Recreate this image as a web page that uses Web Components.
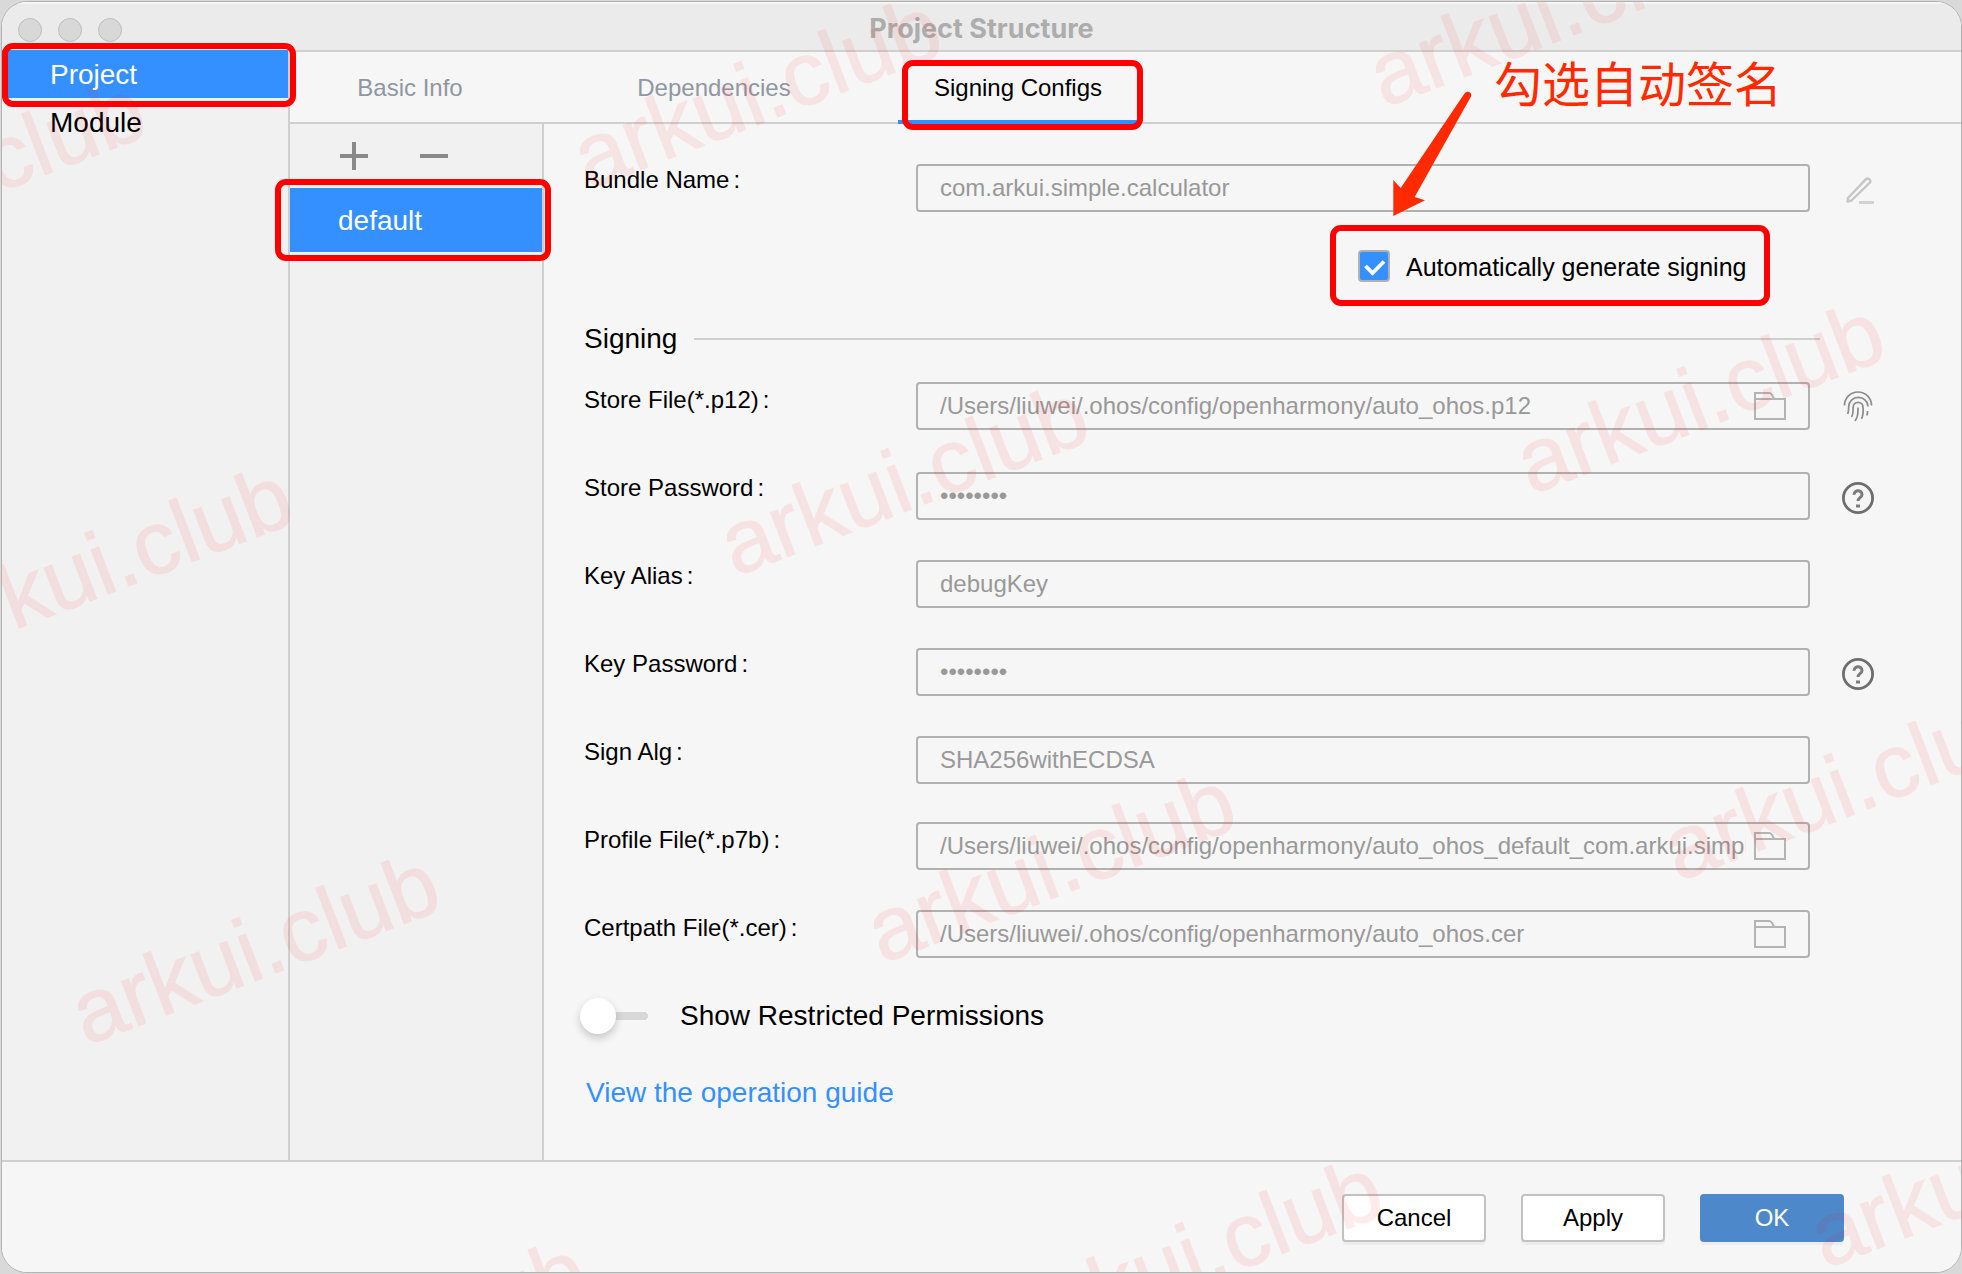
<!DOCTYPE html>
<html lang="en">
<head>
<meta charset="utf-8">
<title>Project Structure</title>
<style>
  html, body { height: 100%; }
  body {
    margin: 0;
    box-sizing: border-box;
    padding: 1px 0 1px 1px;
    background: #d9d9d9;
    color: #000;
    font: 24px/30px "Liberation Sans", Arial, sans-serif;
    --line: #cfcfcf;
    --pane: #f1f1f1;
    --page: #f6f6f6;
    --accent: #3590ff;
    --mark: #ff0000;
  }
</style>
</head>
<body>
<project-window></project-window>

<script>
const FRAME = `
  .framed { position: relative; }
  .framed::after {
    content: ""; position: absolute; z-index: 6; pointer-events: none;
    inset: var(--frame); border: 6px solid var(--mark); border-radius: 11px;
  }`;

function define(name, html, setup) {
  const tpl = document.createElement('template');
  tpl.innerHTML = html;
  customElements.define(name, class extends HTMLElement {
    constructor() {
      super();
      this.attachShadow({ mode: 'open' }).append(tpl.content.cloneNode(true));
    }
    connectedCallback() { if (setup) setup(this, this.shadowRoot); }
  });
}

const ICONS = {
  plus: '<svg width="28" height="28" viewBox="0 0 28 28"><path d="M14 0v28M0 14h28" stroke="#8a8a8a" stroke-width="4"/></svg>',
  minus: '<svg width="28" height="28" viewBox="0 0 28 28"><path d="M0 14h28" stroke="#8a8a8a" stroke-width="4"/></svg>',
  edit: '<svg width="32" height="32" viewBox="0 0 32 32" fill="none" stroke="#c6c6c6" stroke-width="2.4"><path d="M6 24L5.500 27.500l4-1L28 8.500q1-2-.8-3.400t-3.200 0z" stroke-linejoin="round"/><path d="M17 28.500h15" stroke="#d2d2d2" stroke-width="3"/></svg>',
  print: '<svg width="32" height="32" viewBox="0 0 32 32" fill="none" stroke="#8c8c8c" stroke-width="1.700"><path d="M2.500 15.500a13.500 13.500 0 0 1 27 0"/><path d="M5.700 24c1.200-3 .8-5 1-7.500a9.500 9 0 0 1 19.300 0"/><path d="M25.600 21q0 2.500-.8 4.500"/><path d="M9.500 27c2.500-3.500 1.200-6.500 1.700-10a4.900 4.700 0 0 1 9.800 0c.4 4.500.4 8-1.500 12"/><path d="M13 31c3.500-4.500 3-8.500 3-13.500"/></svg>',
  help: '<svg width="32" height="32" viewBox="0 0 32 32" fill="none" stroke="#6e6e6e"><circle cx="16" cy="16" r="14.600" stroke-width="2.800"/><path d="M12 12.800c0-5.200 8-5.200 8-.3 0 3.200-4 3.200-4 6.500" stroke-width="3" stroke="#7c7c7c"/><path d="M14 24h4" stroke-width="3" stroke="#7c7c7c"/></svg>',
  folder: '<svg width="32" height="28" viewBox="0 0 32 28" fill="none" stroke="#b4b4b4" stroke-width="2"><path d="M1 27V1h14.500q1.500 0 2.500 2l2 3.500M1 7h30v20H1z"/></svg>'
};

define('ui-icon', `<style>:host{display:block;flex:none}svg{display:block}</style><span></span>`, (el, root) => {
  root.querySelector('span').innerHTML = ICONS[el.getAttribute('name')];
});

define('title-bar', `
  <style>
    :host { display: grid; grid-template-columns: 1fr auto 1fr; align-items: center; height: 48px; padding: 0 16px;
      box-sizing: border-box; background: #ebebeb; box-shadow: inset 0 2px #f5f5f5; }
    .lights { display: flex; gap: 16px; padding-top: 8px; }
    i { width: 24px; height: 24px; box-sizing: border-box; border: 1px solid #bdbdbd; border-radius: 50%; background: #d9d9d9; }
    h1 { margin: 0; padding-top: 6px; font: bold 27px/30px Inter, "Liberation Sans", sans-serif; color: #adadad; }
  </style>
  <div class="lights"><i></i><i></i><i></i></div>
  <h1><slot></slot></h1>`);

define('nav-item', `
  <style>
    ${FRAME}
    :host { display: block; --frame: -7px -8px -9px 0; }
    :host([tall]) { --frame: -9px -9px -9px -15px; }
    button { display: block; width: 100%; height: 48px; padding: 2px 48px 0; border: 0; background: none; color: #000;
      font: 28px/32px "Liberation Sans", Arial, sans-serif; text-align: left; }
    :host([tall]) button { height: 64px; }
    .framed button { background: var(--accent); color: #fff; }
  </style>
  <div><button type="button"><slot></slot></button></div>`, (el, root) => {
  root.querySelector('div').classList.toggle('framed', el.hasAttribute('selected'));
});

define('tab-item', `
  <style>
    ${FRAME}
    :host { display: block; width: 240px; --frame: 8px -5px -6px 4px; margin-bottom: -2px; }
    button { display: block; width: 100%; height: 72px; padding: 0; border: 0; background: none; color: #9197a3;
      font: 24px/30px "Liberation Sans", Arial, sans-serif; }
    .framed button { color: #000; border-bottom: 4px solid var(--accent); padding-top: 4px; }
  </style>
  <div><button type="button"><slot></slot></button></div>`, (el, root) => {
  root.querySelector('div').classList.toggle('framed', el.hasAttribute('selected'));
});

define('config-list', `
  <style>
    :host { display: block; width: 252px; flex: none; border-right: 2px solid var(--line); background: var(--pane); }
    .tools { display: flex; align-items: center; gap: 52px; height: 64px; padding-left: 50px; }
    button { padding: 0; border: 0; background: none; }
  </style>
  <div class="tools">
    <button type="button" aria-label="Add"><ui-icon name="plus"></ui-icon></button>
    <button type="button" aria-label="Remove"><ui-icon name="minus"></ui-icon></button>
  </div>
  <slot></slot>`);

define('form-field', `
  <style>
    :host { display: grid; grid-template-columns: 332px minmax(0, 1fr) 64px; align-items: start; min-height: 88px; }
    label { padding-top: 3px; line-height: 30px; }
    label span { margin-left: 4px; }
    .box { display: flex; align-items: center; gap: 8px; box-sizing: border-box; height: 48px; margin-top: 2px; padding: 0 22px;
      border: 2px solid #b1b1b1; border-radius: 4px; }
    input { flex: 1; min-width: 0; height: 44px; padding: 0; border: 0; outline: 0; background: none; color: #999;
      font: 24px/30px "Liberation Sans", Arial, sans-serif; }
    button { padding: 0; border: 0; background: none; }
    .aside { display: flex; justify-content: flex-end; padding-top: 12px; }
    :host([kind="file"]) .box { margin-top: 0; }
    :host([kind="file"]) .aside { padding-top: 8px; }
  </style>
  <label for="f"><slot></slot><span>:</span></label>
  <div class="box"><input id="f" readonly></div>
  <div class="aside"></div>`, (el, root) => {
  const input = root.querySelector('input');
  const kind = el.getAttribute('kind');
  input.type = kind === 'password' ? 'password' : 'text';
  input.value = el.getAttribute('value');
  if (kind === 'file')
    input.insertAdjacentHTML('afterend', '<button type="button" aria-label="Browse"><ui-icon name="folder"></ui-icon></button>');
  if (el.hasAttribute('aside'))
    root.querySelector('.aside').innerHTML = `<button type="button" aria-label="${el.getAttribute('aside')}"><ui-icon name="${el.getAttribute('aside')}"></ui-icon></button>`;
});

define('auto-sign', `
  <style>
    ${FRAME}
    :host { display: flex; justify-content: flex-end; padding-right: 124px; }
    .framed { display: flex; align-items: center; gap: 16px; height: 32px; --frame: -25px -20px -24px -28px; }
    .tick { display: grid; width: 32px; height: 32px; }
    .tick > * { grid-area: 1 / 1; }
    input { appearance: none; width: 32px; height: 32px; margin: 0; border: 2px solid #b1b1b1; border-radius: 4px; background: var(--accent); }
    svg { z-index: 1; pointer-events: none; }
    label { min-width: 344px; font-size: 25px; padding-top: 2px; }
    .note { position: absolute; right: -32px; bottom: 177px; z-index: 6; color: #ff2a00; white-space: nowrap;
      font: 48px/48px "Noto Sans CJK SC", sans-serif; }
    .arrow { position: absolute; left: 34px; bottom: 66px; z-index: 6; }
  </style>
  <div class="framed">
    <span class="tick"><input id="auto" type="checkbox" checked>
      <svg width="32" height="32" viewBox="0 0 32 32"><path d="M7.500 16l7 7L26 11.500" fill="none" stroke="#fff" stroke-width="3.800"/></svg></span>
    <label for="auto"><slot></slot></label>
    <span class="note" lang="zh">勾选自动签名</span>
    <svg class="arrow" width="82" height="126" viewBox="0 0 82 126"><path d="M72.500 3.500A3.600 3.600 0 0 1 79 6.500L22.700 107L33 110.300L1.300 126V90L8.700 98Z" fill="#ff2a00"/></svg>
  </div>`);

define('section-title', `
  <style>
    :host { display: flex; align-items: center; gap: 17px; margin: 40px 54px 26px 0; height: 34px; }
    h2 { margin: 0; font: 28px/34px "Liberation Sans", Arial, sans-serif; }
    i { flex: 1; height: 2px; background: var(--line); }
  </style>
  <h2><slot></slot></h2><i></i>`);

define('toggle-switch', `
  <style>
    :host { display: flex; align-items: center; gap: 32px; margin-left: -4px; font-size: 28px; line-height: 32px; }
    input { appearance: none; flex: none; width: 68px; height: 36px; margin: 0; 
      background: linear-gradient(#d8d8d8, #d8d8d8) 18px 14px / 46px 8px no-repeat, radial-gradient(circle at 64px 18px, #d8d8d8 4px, transparent 4px); }
    input::before { content: ""; display: block; width: 36px; height: 36px; border-radius: 50%; background: #fff; box-shadow: 0 4px 8px rgba(0,0,0,.2); }
  </style>
  <input id="t" type="checkbox" role="switch"><label for="t"><slot></slot></label>`);

define('guide-link', `
  <style>
    :host { display: block; margin-top: 43px; padding-left: 2px; font-size: 28px; line-height: 32px; }
    a { color: var(--accent); text-decoration: none; }
  </style>
  <a href="#guide"><slot></slot></a>`);

define('dialog-footer', `
  <style>
    :host { display: flex; justify-content: flex-end; gap: 35px; padding: 32px 117px 30px; border-top: 2px solid var(--line); background: var(--page); }
    button { width: 144px; height: 48px; padding: 0; border: 2px solid #c2c2c2; border-radius: 4px; background: #fff; color: #000;
      font: 24px/30px "Liberation Sans", Arial, sans-serif; box-shadow: 0 3px 1px rgba(0,0,0,.04); }
    .ok { border-color: #4d89ca; background: #4d89ca; color: #fff; }
  </style>
  <button type="button">Cancel</button><button type="button">Apply</button><button type="button" class="ok">OK</button>`);

define('water-mark', `
  <style>
    :host { position: absolute; inset: 0; z-index: 5; overflow: hidden; pointer-events: none; }
    svg { display: block; width: 100%; height: 100%; opacity: .075; }
    text { font: 90px "Liberation Sans", Arial, sans-serif; fill: #f00; stroke: #f00; stroke-width: 1px; }
  </style>
  <svg aria-hidden="true"></svg>`, (el, root) => {
  const spots = [[0, -2], [0, -1], [0, 0], [0, 1], [1, -2], [1, -1], [1, 0], [1, 1], [2, -2], [2, -1], [2, 0], [2, 1]];
  root.querySelector('svg').innerHTML = spots.map(([col, row]) =>
    `<text transform="translate(${84 + 796 * col + 147 * row} ${1044 - 82 * col + 387 * row}) rotate(-21)">${el.getAttribute('text')}</text>`).join('');
});

define('project-window', `
  <style>
    :host { display: flex; flex-direction: column; position: relative; box-sizing: border-box; min-height: 100%;
      border: 1px solid #b3b3b3; border-radius: 26px; overflow: hidden; background: var(--page); }
    main { flex: 1; display: flex; }
    nav { flex: none; width: 286px; border-right: 2px solid var(--line); background: var(--pane); }
    .right { flex: 1; min-width: 0; display: flex; flex-direction: column; }
    .tabs { display: flex; gap: 64px; height: 70px; border: solid var(--line); border-width: 2px 0; }
    .body { flex: 1; display: flex; }
    form { flex: 1; min-width: 0; padding: 38px 87px 40px 40px; }
  </style>
  <title-bar>Project Structure</title-bar>
  <main>
    <nav><nav-item selected>Project</nav-item><nav-item>Module</nav-item></nav>
    <div class="right">
      <div class="tabs"><tab-item>Basic Info</tab-item><tab-item>Dependencies</tab-item><tab-item selected>Signing Configs</tab-item></div>
      <div class="body">
        <config-list><nav-item tall selected>default</nav-item></config-list>
        <form>
          <form-field value="com.arkui.simple.calculator" aside="edit">Bundle Name</form-field>
          <auto-sign>Automatically generate signing</auto-sign>
          <section-title>Signing</section-title>
          <form-field kind="file" value="/Users/liuwei/.ohos/config/openharmony/auto_ohos.p12" aside="print">Store File(*.p12)</form-field>
          <form-field kind="password" value="12345678" aside="help">Store Password</form-field>
          <form-field value="debugKey">Key Alias</form-field>
          <form-field kind="password" value="12345678" aside="help">Key Password</form-field>
          <form-field value="SHA256withECDSA">Sign Alg</form-field>
          <form-field kind="file" value="/Users/liuwei/.ohos/config/openharmony/auto_ohos_default_com.arkui.simple">Profile File(*.p7b)</form-field>
          <form-field kind="file" value="/Users/liuwei/.ohos/config/openharmony/auto_ohos.cer">Certpath File(*.cer)</form-field>
          <toggle-switch>Show Restricted Permissions</toggle-switch>
          <guide-link>View the operation guide</guide-link>
        </form>
      </div>
    </div>
  </main>
  <dialog-footer></dialog-footer>
  <water-mark text="arkui.club"></water-mark>`);
</script>
</body>
</html>
